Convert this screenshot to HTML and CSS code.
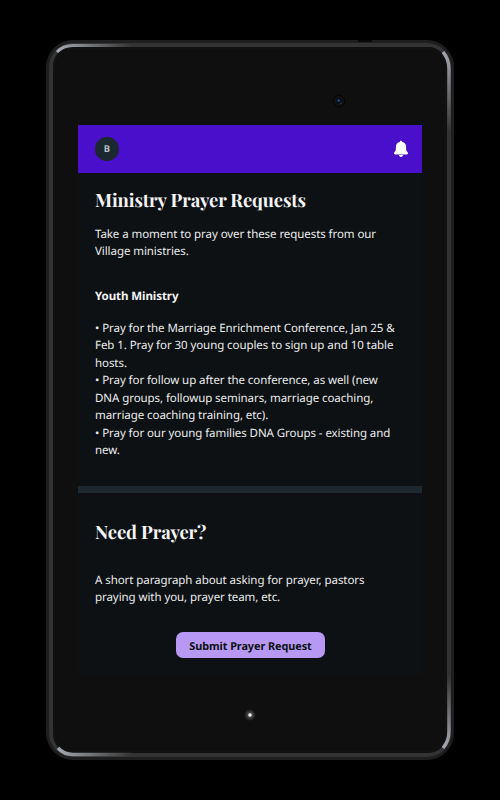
FILE: index.html
```
<!DOCTYPE html>
<html lang="en">
<head>
    <meta charset="UTF-8">
    <meta name="viewport" content="width=device-width, initial-scale=1.0">
    <title>Ministry Prayer Requests</title>
    <link rel="stylesheet" href="styles.css">
</head>
<body>
    <div class="device">
        <!-- tablet bezel, camera and charging light -->
        <svg class="bezel" width="408" height="720" viewBox="0 0 408 720" fill="none">
            <defs>
                <linearGradient id="shineRight" gradientUnits="userSpaceOnUse" x1="12" y1="0" x2="86" y2="0">
                    <stop offset="0" stop-color="#a4a9b0"/>
                    <stop offset="1" stop-color="#333"/>
                </linearGradient>
                <linearGradient id="shineDown" gradientUnits="userSpaceOnUse" x1="0" y1="12" x2="0" y2="92">
                    <stop offset="0" stop-color="#a4a9b0"/>
                    <stop offset="1" stop-color="#333"/>
                </linearGradient>
                <linearGradient id="shineUp" gradientUnits="userSpaceOnUse" x1="0" y1="708" x2="0" y2="635">
                    <stop offset="0" stop-color="#a4a9b0"/>
                    <stop offset="1" stop-color="#333"/>
                </linearGradient>
                <radialGradient id="glow">
                    <stop offset="0" stop-color="#999"/>
                    <stop offset="0.4" stop-color="#444"/>
                    <stop offset="1" stop-color="#0f0f0f"/>
                </radialGradient>
            </defs>
            <rect width="408" height="720" rx="27" fill="#1e1e1e"/>
            <rect x="3" y="3" width="402" height="714" rx="24" fill="#333"/>
            <rect x="7" y="7" width="394" height="706" rx="19" fill="#050505"/>
            <rect x="7.8" y="7.8" width="392.4" height="704.4" rx="18" stroke="#222" stroke-width="0.6" fill="#0f0f0f"/>
            <path d="M312 1h14" stroke="#080808" stroke-width="2"/>
            <path d="M11 12Q17 5.5 27 5.5H86" stroke="url(#shineRight)" stroke-width="3"/>
            <path d="M397 12Q403 19 403 29V92" stroke="url(#shineDown)" stroke-width="3.4"/>
            <path d="M12 708Q18 714.5 27 714.5H86" stroke="url(#shineRight)" stroke-width="3.4"/>
            <path d="M397 708Q403 701 403 691V635" stroke="url(#shineUp)" stroke-width="3.4"/>
            <circle cx="293" cy="61" r="5.6" fill="#121212" stroke="#050505"/>
            <circle cx="293" cy="61" r="3" fill="#0b1020"/>
            <circle cx="292.7" cy="60.6" r="1.1" fill="#1d5cab"/>
            <circle cx="295" cy="63.2" r="0.7" fill="#444"/>
            <circle cx="204" cy="675" r="6" fill="url(#glow)"/>
            <circle cx="204" cy="675" r="1.7" fill="#eee"/>
        </svg>

        <div class="screen">
            <div class="navbar">
                <div class="avatar">B</div>
                <svg class="bell" width="16" height="18" viewBox="0 0 16 18" fill="#fff">
                    <path d="M8 .8C8.7.8 9 1.3 9.2 1.9 11.6 2.4 13.1 4.1 13.1 6.7V9.6C13.1 11.2 15 12 15 13.2 15 14 14.4 14.4 13.6 14.4H2.4C1.6 14.4 1 14 1 13.2 1 12 2.9 11.2 2.9 9.6V6.7C2.9 4.1 4.4 2.4 6.8 1.9 7 1.3 7.3.8 8 .8Z"/>
                    <path d="M6 15.1H10C9.8 16.3 9.1 17 8 17S6.2 16.3 6 15.1Z"/>
                </svg>
            </div>

            <div class="section requests">
                <h1>Ministry Prayer Requests</h1>
                <p>Take a moment to pray over these requests from our<br>Village ministries.</p>
                <h2>Youth Ministry</h2>
                <p>
                    • Pray for the Marriage Enrichment Conference, Jan 25 &amp;<br>
                    Feb 1. Pray for 30 young couples to sign up and 10 table<br>
                    hosts.<br>
                    • Pray for follow up after the conference, as well (new<br>
                    DNA groups, followup seminars, marriage coaching,<br>
                    marriage coaching training, etc).<br>
                    • Pray for our young families DNA Groups - existing and<br>
                    new.
                </p>
            </div>

            <div class="section need-prayer">
                <h1>Need Prayer?</h1>
                <p>A short paragraph about asking for prayer, pastors<br>praying with you, prayer team, etc.</p>
                <button class="submit-button">Submit Prayer Request</button>
            </div>
        </div>
    </div>
</body>
</html>
```

FILE: styles.css
```
body {
    margin: 0;
    height: 800px;
    display: flex;
    align-items: center;
    justify-content: center;
    background-color: black;
    color: #f4f4f4;
    font-family: "Noto Sans", sans-serif;
    font-size: 11.5px;
    line-height: 17.45px;
    letter-spacing: -0.07px;
    text-rendering: geometricPrecision;
}
.device {
    position: relative;
    box-sizing: border-box;
    width: 408px;
    height: 720px;
    padding: 85.4px 32px 0;
}
.bezel {
    position: absolute;
    top: 0;
    left: 0;
}
.screen {
    position: relative;
    height: 549.6px;
    background-color: #0d1114;
}
.navbar {
    display: flex;
    align-items: center;
    justify-content: space-between;
    box-sizing: border-box;
    height: 47.3px;
    padding: 0 13.5px 0 17px;
    background-color: #490fcb;
}
.avatar {
    display: flex;
    align-items: center;
    justify-content: center;
    width: 23.5px;
    height: 23.5px;
    border-radius: 50%;
    background-color: #1c2830;
    color: #b4bdc6;
    font-size: 9.5px;
    font-weight: bold;
    line-height: 26px;
}
.section {
    box-sizing: border-box;
    padding-left: 17px;
    white-space: nowrap;
}
h1 {
    margin: 0;
    font-family: "Playfair Display", "Liberation Serif", serif;
    font-size: 18.4px;
    line-height: 26px;
    font-weight: bold;
    letter-spacing: -0.13px;
}
h2 {
    margin: 0;
    font-size: 11.5px;
    line-height: 18px;
    font-weight: bold;
}
p {
    margin: 0;
    color: #ebebeb;
}
.requests {
    height: 320.3px;
    padding-top: 14.3px;
    border-bottom: 7px solid #1c272e;
}
.requests h1 {
    margin-bottom: 13px;
}
.requests h2 {
    margin: 27px 0 14px;
}
.need-prayer {
    padding-top: 26px;
}
.need-prayer h1 {
    margin-bottom: 27px;
}
.submit-button {
    display: block;
    width: 149px;
    height: 26px;
    margin: 25.5px 0 0 81px;
    padding: 1.5px 0 0;
    border: none;
    border-radius: 7px;
    background-color: #b799f3;
    color: #0d1114;
    font-family: "Noto Sans", sans-serif;
    font-size: 10.9px;
    font-weight: bold;
    letter-spacing: -0.08px;
    text-rendering: geometricPrecision;
}
```
